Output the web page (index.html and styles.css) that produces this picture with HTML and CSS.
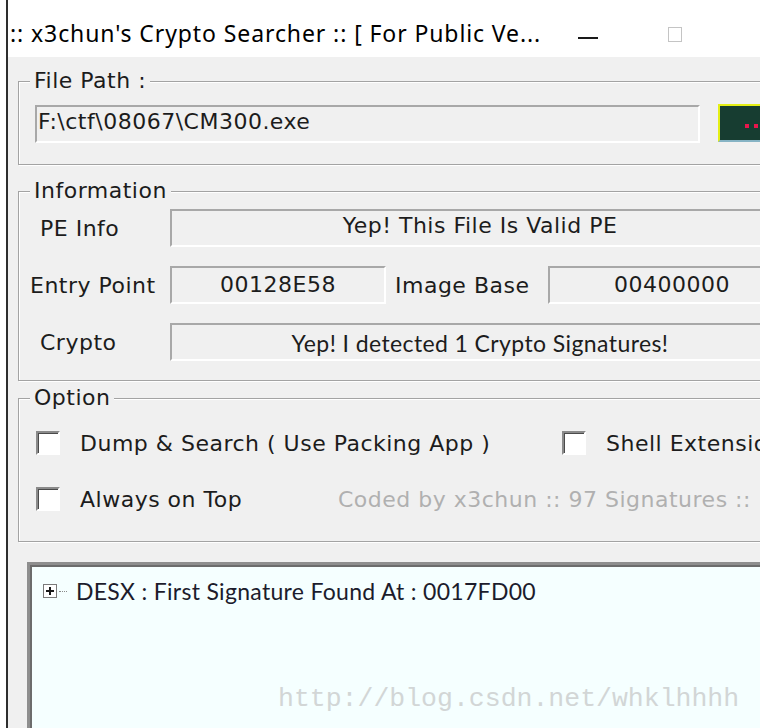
FILE: index.html
```html
<!DOCTYPE html>
<html lang="en">
<head>
<meta charset="utf-8">
<title>Crypto Searcher</title>
<link rel="stylesheet" href="styles.css">
</head>
<body>
<div class="window">
  <div class="titlebar">
    <div class="title">:: x3chun's Crypto Searcher :: [ For Public Ve...</div>
    <div class="ctl"><span class="min-bar"></span></div>
    <div class="ctl"><span class="max-box"></span></div>
  </div>
  <div class="client">
    <fieldset class="group group-file">
      <legend>File Path :</legend>
      <div class="file-row">
        <div class="field field-path">F:\ctf\08067\CM300.exe</div>
        <button class="browse" type="button"><span class="dot"></span><span class="dot"></span></button>
      </div>
    </fieldset>

    <fieldset class="group group-info">
      <legend>Information</legend>
      <div class="info-row">
        <span class="lbl lbl-indent">PE Info</span>
        <div class="field field-wide">Yep! This File Is Valid PE</div>
      </div>
      <div class="info-row">
        <span class="lbl">Entry Point</span>
        <div class="field field-entry">00128E58</div>
        <span class="lbl lbl-base">Image Base</span>
        <div class="field field-base">00400000</div>
      </div>
      <div class="info-row">
        <span class="lbl lbl-indent">Crypto</span>
        <div class="field field-wide field-comic">Yep! I detected 1 Crypto Signatures!</div>
      </div>
    </fieldset>

    <fieldset class="group group-opt">
      <legend>Option</legend>
      <div class="opt-row">
        <label class="opt opt-dump"><span class="check"></span>Dump &amp; Search ( Use Packing App )</label>
        <label class="opt"><span class="check"></span>Shell Extension</label>
      </div>
      <div class="opt-row">
        <label class="opt opt-top"><span class="check"></span>Always on Top</label>
        <span class="coded">Coded by x3chun :: 97 Signatures ::</span>
      </div>
    </fieldset>

    <div class="tree">
      <div class="node">
        <span class="expander"></span><span class="branch"></span>
        <span class="node-text">DESX : First Signature Found At : 0017FD00</span>
      </div>
      <div class="watermark">http://blog.csdn.net/whklhhhh</div>
    </div>
  </div>
</div>
</body>
</html>
```

FILE: styles.css
```css
html, body {
  margin: 0;
  padding: 0;
}

body {
  width: 760px;
  height: 728px;
  overflow: hidden;
  background: #ffffff;
  font-family: "DejaVu Sans", Verdana, sans-serif;
  color: #1c1c1c;
}

/* window frame */
.window {
  margin-left: 6px;
  border-left: 2px solid #2e2e2e;
  width: 900px;
  height: 728px;
  display: flex;
  flex-direction: column;
}

.titlebar {
  height: 57px;
  box-sizing: border-box;
  flex: none;
  background: #ffffff;
  display: grid;
  grid-template-columns: 568px 90px 1fr;
  align-items: center;
  padding: 10px 0 0 2px;
}

.title {
  font-family: "Noto Sans", "Open Sans", sans-serif;
  font-size: 23px;
  letter-spacing: 0.9px;
  color: #000000;
  white-space: nowrap;
  padding-bottom: 2px;
}

.ctl {
  display: flex;
  align-items: center;
  height: 100%;
}

.min-bar {
  width: 20px;
  height: 2px;
  background: #1a1a1a;
  margin-top: 8px;
}

.max-box {
  width: 12px;
  height: 13px;
  border: 1px solid #c4c4c4;
  margin-top: 1px;
}

/* client area */
.client {
  flex: 1;
  background: #f0f0f0;
  padding-left: 10px;
  display: flex;
  flex-direction: column;
  align-items: flex-start;
  font-size: 22px;
  letter-spacing: 0.5px;
}

.group {
  width: 787px;
  box-sizing: border-box;
  margin: 0;
  border: 1px solid #a3a3a3;
  box-shadow: inset 1px 1px 0 #ffffff, 1px 1px 0 #ffffff;
  min-inline-size: 0;
}

.group legend {
  font-size: 22px;
  line-height: 24px;
  padding: 0 4px;
  margin-left: -5px;
  background: #f0f0f0;
  color: #1c1c1c;
}

.group-file {
  margin-top: 12px;
  padding: 12px 0 21px 16px;
}

.group-info {
  margin-top: 14px;
  padding: 6px 0 19px 11px;
}

.group-info legend {
  margin-left: 0;
}

.group-opt {
  margin-top: 5px;
  padding: 16px 0 25px 17px;
}

.group-opt legend {
  margin-left: -6px;
}

/* read-only text fields */
.field {
  box-sizing: border-box;
  height: 38px;
  border: 2px solid;
  border-color: #a8a8a8 #ffffff #ffffff #a8a8a8;
  background: #f0f0f0;
  line-height: 34px;
  text-align: center;
  white-space: nowrap;
  overflow: hidden;
}

.file-row {
  display: flex;
  align-items: flex-start;
}

.field-path {
  width: 665px;
  text-align: left;
  padding-left: 1px;
  line-height: 30px;
}

.browse {
  margin: -1px 0 0 18px;
  width: 70px;
  height: 38px;
  box-sizing: border-box;
  padding: 0 0 0 25px;
  background: #173d31;
  border: 2px solid;
  border-color: #e4ef16 #173d31 #86b3c4 #e4ef16;
  display: flex;
  align-items: center;
  gap: 5px;
}

.dot {
  width: 4px;
  height: 4px;
  background: #e8164c;
  margin-top: 6px;
}

.info-row {
  display: flex;
  align-items: center;
  height: 38px;
}

.info-row + .info-row {
  margin-top: 19px;
}

.lbl {
  width: 140px;
  flex: none;
  white-space: nowrap;
}

.lbl-indent {
  padding-left: 10px;
  box-sizing: border-box;
}

.field-wide {
  width: 620px;
  line-height: 30px;
}

.field-entry {
  width: 216px;
}

.lbl-base {
  width: auto;
  margin-left: 9px;
  flex: 0 0 153px;
}

.field-base {
  width: 248px;
}

.field-comic {
  font-family: "Comic Sans MS", "Lato", sans-serif;
  font-size: 23px;
  letter-spacing: 0.4px;
  line-height: 36px;
}

/* option checkboxes */
.opt-row {
  display: flex;
  align-items: center;
  height: 34px;
  white-space: nowrap;
}

.opt-row + .opt-row {
  margin-top: 22px;
}

.opt {
  display: flex;
  align-items: center;
  flex: none;
}

.opt-dump {
  width: 526px;
}

.opt-top {
  width: 302px;
}

.check {
  width: 24px;
  height: 24px;
  box-sizing: border-box;
  border: 2px solid;
  border-color: #8a8a8a #ffffff #ffffff #8a8a8a;
  box-shadow: inset 1px 1px 0 #4a4a4a;
  background: #ffffff;
  margin-right: 20px;
  flex: none;
}

.coded {
  color: #b0b0b0;
}

/* results tree */
.tree {
  position: relative;
  margin: 20px 0 0 9px;
  width: 800px;
  flex: 1;
  background: #f5ffff;
  border-top: 3px solid #8e8e8e;
  border-left: 3px solid #8e8e8e;
  box-shadow: inset 2px 2px 0 #6c6c6c;
  padding: 14px 0 0 13px;
}

.node {
  display: flex;
  align-items: center;
  height: 24px;
}

.expander {
  position: relative;
  width: 14px;
  height: 14px;
  box-sizing: border-box;
  border: 1px solid #7a7a7a;
  background: #ffffff;
  flex: none;
}

.expander::before,
.expander::after {
  content: "";
  position: absolute;
  background: #1a1a1a;
}

.expander::before {
  left: 2px;
  top: 5px;
  width: 8px;
  height: 2px;
}

.expander::after {
  left: 5px;
  top: 2px;
  width: 2px;
  height: 8px;
}

.branch {
  width: 8px;
  margin: 0 9px 0 2px;
  border-top: 1px dotted #8a8a8a;
}

.node-text {
  font-family: "Comic Sans MS", "Lato", sans-serif;
  font-size: 23px;
  letter-spacing: 0.3px;
  color: #1c1c2c;
}

.watermark {
  position: absolute;
  left: 248px;
  top: 119px;
  font-family: "Liberation Mono", monospace;
  font-size: 26.5px;
  letter-spacing: 0;
  color: #d2d6d6;
}
```
